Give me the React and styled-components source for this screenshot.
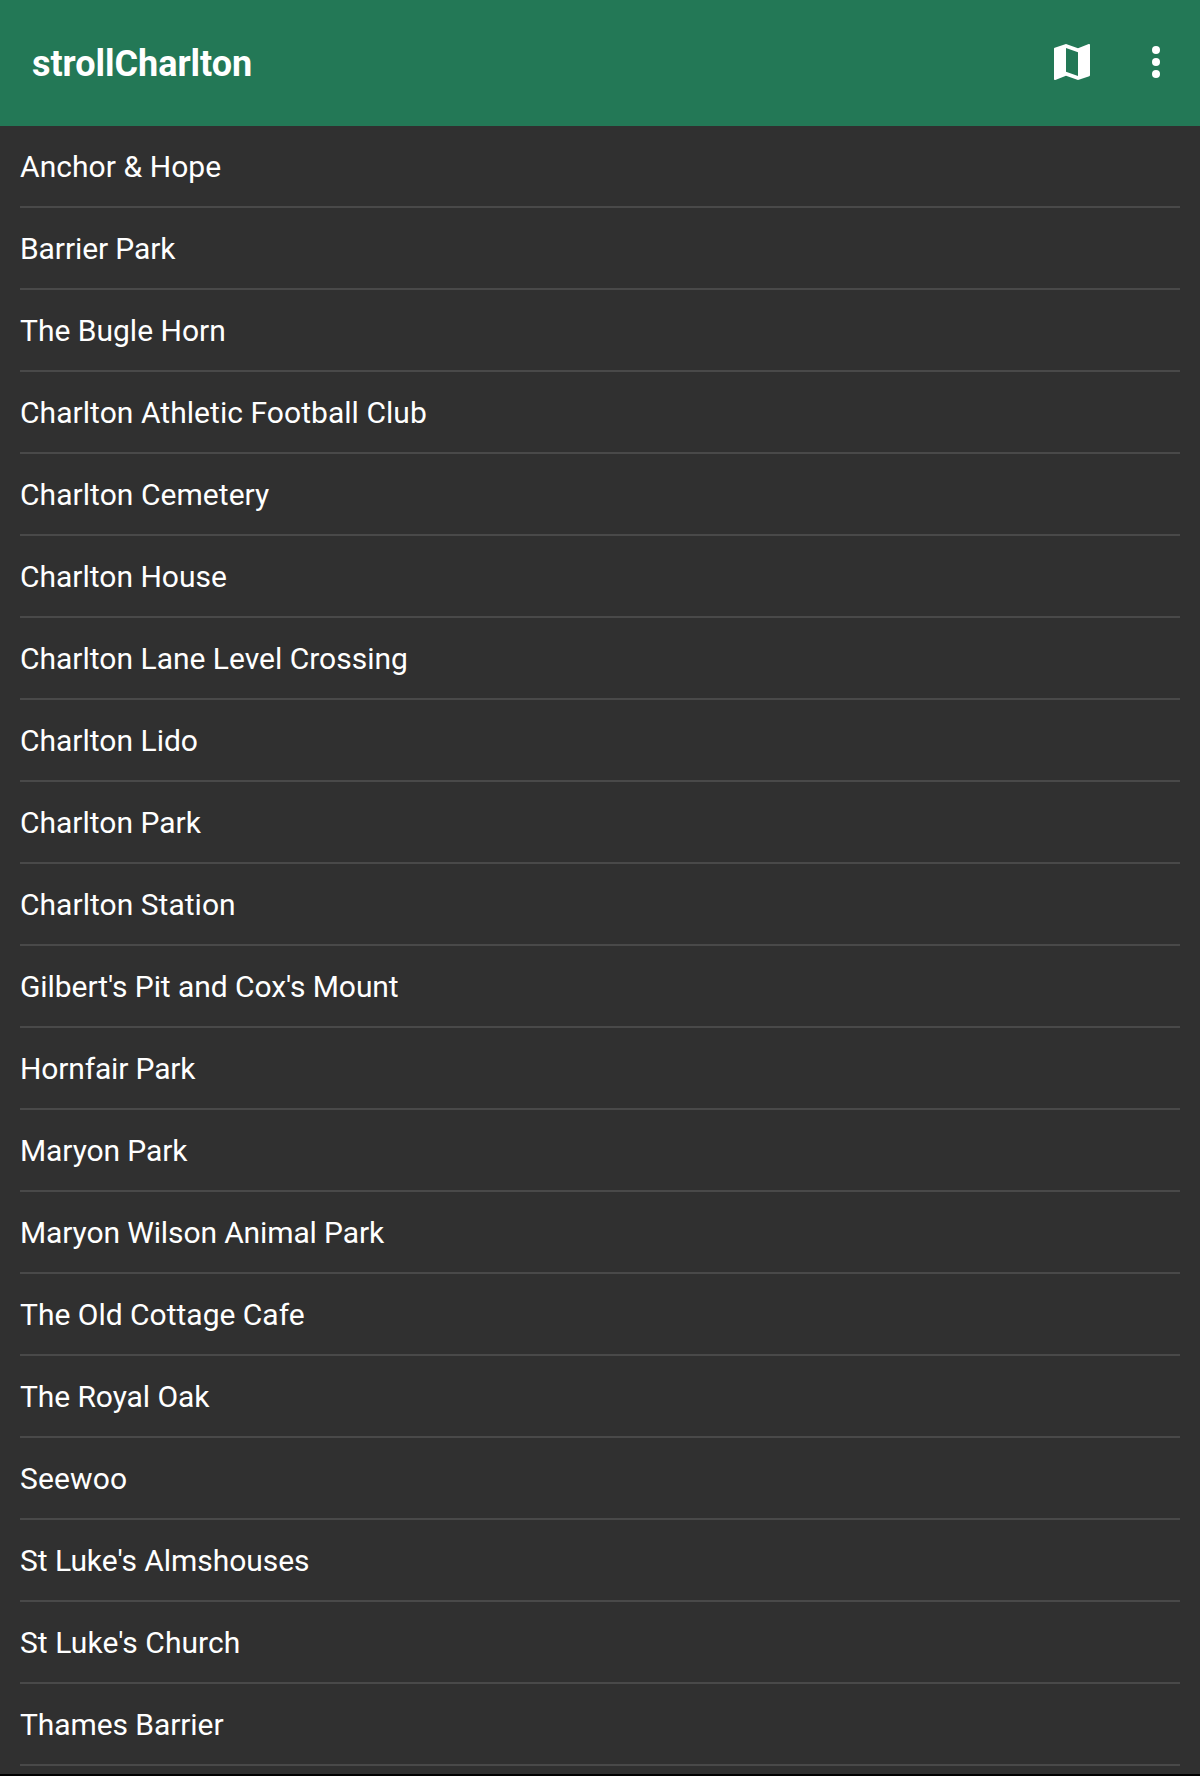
import React from "react";
import styled, { createGlobalStyle } from "styled-components";

const Global = createGlobalStyle`
  * { box-sizing: border-box; }
  body { margin: 0; background: #303030; font-family: Roboto, sans-serif; color: #fff; }
`;
const Screen = styled.main`
  display: flex;
  flex-direction: column;
  height: 1776px;
  overflow: hidden;
  background: #303030;
  border-bottom: 2px solid #000;
`;
const AppBar = styled.header`
  display: flex;
  align-items: center;
  justify-content: space-between;
  flex: none;
  height: 126px;
  padding: 0 23px 0 32px;
  background: #237856;
`;
const Title = styled.h1`
  margin: 0;
  padding-top: 2px;
  font-size: 36px;
  line-height: 44px;
  font-weight: 700;
  letter-spacing: -0.03px;
`;
const Actions = styled.div`
  display: flex;
  align-items: center;
  gap: 39px;
  padding-bottom: 2px;
`;
const IconButton = styled.button`
  display: flex;
  padding: 0;
  border: 0;
  background: none;
  color: #fff;
`;
const Places = styled.ul`
  flex: none;
  margin: 0;
  padding: 0 20px;
  list-style: none;
`;
const Place = styled.li`
  display: flex;
  align-items: center;
  height: 82px;
  border-bottom: 2px solid #494949;
  font-size: 30px;
  letter-spacing: ${(p) => p.$tracking || 0}px;
`;
const places = [
  { name: "Anchor & Hope", tracking: 0.06 },
  { name: "Barrier Park", tracking: -0.1 },
  { name: "The Bugle Horn" },
  { name: "Charlton Athletic Football Club", tracking: 0.05 },
  { name: "Charlton Cemetery", tracking: 0.05 },
  { name: "Charlton House" },
  { name: "Charlton Lane Level Crossing" },
  { name: "Charlton Lido" },
  { name: "Charlton Park" },
  { name: "Charlton Station", tracking: 0.03 },
  { name: "Gilbert's Pit and Cox's Mount", tracking: -0.07 },
  { name: "Hornfair Park", tracking: -0.15 },
  { name: "Maryon Park", tracking: -0.1 },
  { name: "Maryon Wilson Animal Park", tracking: -0.12 },
  { name: "The Old Cottage Cafe" },
  { name: "The Royal Oak", tracking: -0.08 },
  { name: "Seewoo", tracking: 0.12 },
  { name: "St Luke's Almshouses", tracking: -0.05 },
  { name: "St Luke's Church", tracking: 0.06 },
  { name: "Thames Barrier", tracking: -0.08 },
];

export default function App() {
  return (
    <Screen>
      <Global />
      <AppBar>
        <Title>strollCharlton</Title>
        <Actions>
          <IconButton aria-label="Map">
            <svg width="48" height="48" viewBox="0 0 24 24" fill="currentColor">
              <path d="M20.500 3l-.16.03L15 5.100 9 3 3.360 4.900c-.21.07-.36.25-.36.48V20.500c0 .28.22.5.5.5l.16-.03L9 18.900l6 2.100 5.640-1.900c.21-.07.36-.25.36-.48V3.500c0-.28-.22-.5-.5-.5zM15 19l-6-2.110V5l6 2.110V19z" />
            </svg>
          </IconButton>
          <IconButton aria-label="More options">
            <svg width="42" height="48" viewBox="1.500 0 21 24" fill="currentColor">
              <circle cx="12" cy="6" r="2" /><circle cx="12" cy="12" r="2" /><circle cx="12" cy="18" r="2" />
            </svg>
          </IconButton>
        </Actions>
      </AppBar>
      <Places>
        {places.map((p) => <Place key={p.name} $tracking={p.tracking}>{p.name}</Place>)}
      </Places>
    </Screen>
  );
}
